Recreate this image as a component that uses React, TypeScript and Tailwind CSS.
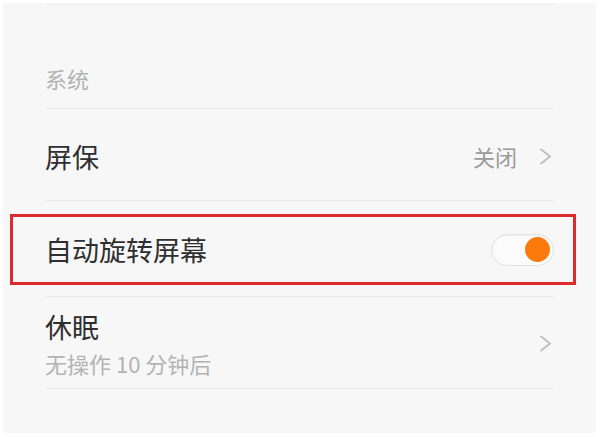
const font = { fontFamily: '"Noto Sans CJK SC", "Noto Sans", sans-serif' };

const Chevron = () => (
  <svg width="13" height="17" viewBox="0 0 13 17" fill="none">
    <polyline points="1.5,1 11,8.5 1.5,16" stroke="#bdbdbd" strokeWidth="1.8" strokeLinejoin="miter" />
  </svg>
);

export default function App() {
  return (
    <div className="w-[600px] h-[437px] bg-white pt-[3px] pl-[3px] pr-[4px] pb-[4px]" style={font}>
      <div className="h-full bg-[#f7f7f7] flex flex-col">
        {/* tail of previous section */}
        <div className="mx-[42px] h-[2px] border-b border-[#ebebeb]" />

        {/* Section header */}
        <div className="mx-[42px] h-[104px] border-b border-[#e9e9e9] flex flex-col justify-end pb-[19px]">
          <span className="text-[22px] leading-none text-[#b3b3b3]">系统</span>
        </div>

        {/* 屏保 */}
        <div className="mx-[42px] h-[92px] border-b border-[#e9e9e9] flex items-center justify-between pt-[3px]">
          <span className="text-[27px] leading-none text-[#2f2f2f]">屏保</span>
          <div className="flex items-center gap-[22px] pr-[2px]">
            <span className="text-[22px] leading-none text-[#9a9a9a]">关闭</span>
            <Chevron />
          </div>
        </div>

        {/* 自动旋转屏幕 */}
        <div className="relative mx-[42px] h-[96px] border-b border-[#e9e9e9] flex items-center justify-between pt-[2px]">
          <span className="text-[27px] leading-none text-[#2f2f2f]">自动旋转屏幕</span>
          <div className="w-[63px] h-[32px] rounded-full bg-[#fbfbfb] border border-[#e2e2e2] shadow-[inset_0_1px_2px_rgba(0,0,0,0.06)] flex items-center justify-end pr-[3px]">
            <div className="w-[25px] h-[25px] rounded-full bg-[#fc7a0c]" />
          </div>
          <div className="absolute left-[-35px] right-[-22px] top-[13px] bottom-[11px] border-[3px] border-[#dc2a2e]" />
        </div>

        {/* 休眠 */}
        <div className="mx-[42px] h-[92px] border-b border-[#e9e9e9] flex items-center justify-between">
          <div className="flex flex-col gap-[12px] pt-[2px]">
            <span className="text-[27px] leading-none text-[#2f2f2f]">休眠</span>
            <span className="text-[22px] leading-none text-[#b3b3b3]">无操作 10 分钟后</span>
          </div>
          <div className="pr-[2px] pt-[2px]">
            <Chevron />
          </div>
        </div>
      </div>
    </div>
  );
}
